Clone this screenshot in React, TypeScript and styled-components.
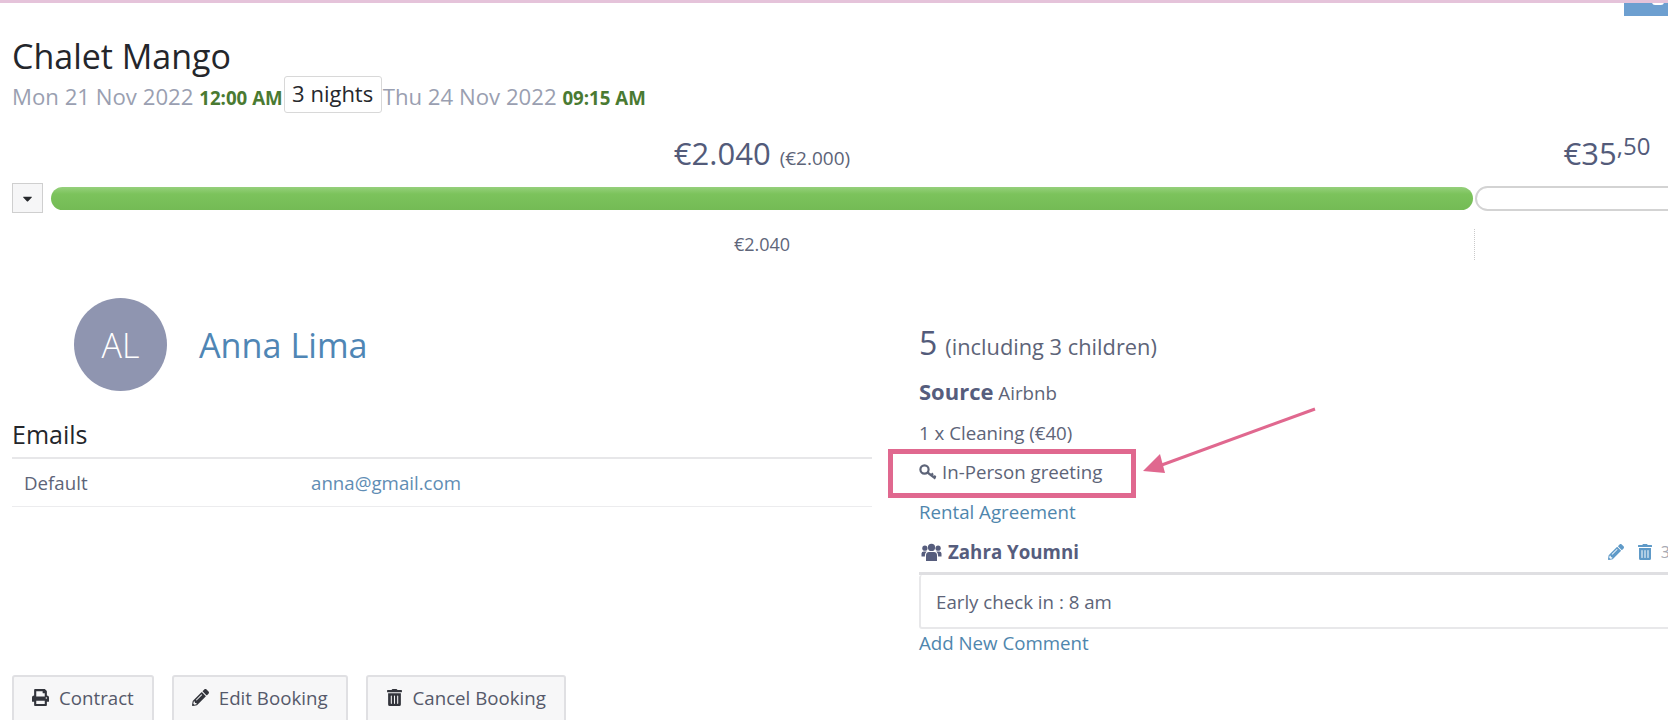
import { createGlobalStyle, styled } from "styled-components";
import { FaCaretDown, FaPencilAlt, FaPrint, FaTrashAlt } from "react-icons/fa";

const GlobalStyle = createGlobalStyle`
  html, body {
    margin: 0;
    padding: 0;
    background: #ffffff;
  }
  body {
    font-family: "Open Sans", "Liberation Sans", sans-serif;
    color: #5d6478;
  }
`;

const Page = styled.div`
  position: relative;
  width: 1668px;
  height: 720px;
  overflow: hidden;
  background: #ffffff;
`;

const TopLine = styled.div`
  height: 3px;
  background: #e5c3da;
`;

const CornerTab = styled.div`
  position: absolute;
  top: 3px;
  right: 0;
  width: 44px;
  height: 13px;
  overflow: hidden;
  background: #6d9fd0;

  &::after {
    content: "";
    position: absolute;
    top: -10px;
    left: 28px;
    width: 8px;
    height: 8px;
    border: 2px solid #ffffff;
    border-radius: 3px;
  }
`;

const Header = styled.header`
  padding: 33px 0 0 12px;
`;

const Title = styled.h1`
  margin: 0;
  font-size: 34px;
  line-height: 40px;
  font-weight: 400;
  color: #24262b;
`;

const DateRow = styled.div`
  display: flex;
  align-items: flex-start;
  height: 37px;
`;

const DateText = styled.span`
  margin-top: 9px;
  font-size: 22.2px;
  line-height: 24px;
  color: #9a9fb1;
  white-space: nowrap;
`;

const Time = styled.b`
  font-size: 18.7px;
  font-weight: 700;
  color: #4a7a32;
`;

const NightsBox = styled.span`
  width: 98px;
  height: 37px;
  margin: 0 1px;
  box-sizing: border-box;
  border: 1px solid #d8d8d8;
  border-radius: 3px;
  font-size: 22px;
  line-height: 33px;
  text-align: center;
  color: #26282c;
  white-space: nowrap;
`;

const SplitRow = styled.div<{ $top: number }>`
  display: grid;
  grid-template-columns: 1424px 266px;
  margin: ${(p) => p.$top}px 0 0 50px;
  width: 1690px;
`;

const AmountCell = styled.div`
  height: 40px;
  text-align: center;
  font-size: 31px;
  line-height: 36px;
  color: #535b7a;
  white-space: nowrap;
`;

const SubAmount = styled.small`
  margin-left: 9px;
  font-size: 19px;
  color: #5d6478;
`;

const Cents = styled.sup`
  font-size: 24px;
  line-height: 0;
  vertical-align: 10px;
`;

const BarRow = styled.div`
  display: flex;
  align-items: center;
  height: 30px;
  width: 1740px;
  margin: 8px 0 0 12px;
`;

const ToggleButton = styled.button`
  display: flex;
  align-items: center;
  justify-content: center;
  flex: none;
  width: 31px;
  height: 30px;
  margin-right: 8px;
  padding: 0;
  background: #f6f6f7;
  border: 1px solid #cfcfcf;
  font-size: 15px;
  color: #26282c;
`;

const PaidBar = styled.div`
  flex: none;
  width: 1422px;
  height: 23px;
  border-radius: 12px;
  background: linear-gradient(#96d07c 0%, #7cc35c 30%, #74bb55 100%);
`;

const OpenBar = styled.div`
  flex: none;
  width: 266px;
  height: 25px;
  margin-left: 2px;
  box-sizing: border-box;
  background: #ffffff;
  border: 2px solid #d3d3d3;
  border-radius: 13px;
`;

const BreakdownCell = styled.div<{ $dotted?: boolean }>`
  height: 31px;
  padding-top: 4px;
  box-sizing: border-box;
  text-align: center;
  font-size: 18px;
  line-height: 22px;
  color: #60667a;
  border-left: ${(p) => (p.$dotted ? "1px dotted #c9c9c9" : "none")};
`;

const Columns = styled.div`
  display: grid;
  grid-template-columns: 860px 760px;
  column-gap: 47px;
  margin-left: 12px;
`;

const LeftColumn = styled.section`
  display: flex;
  flex-direction: column;
  padding-top: 38px;
`;

const GuestRow = styled.div`
  display: flex;
  align-items: center;
  gap: 32px;
  padding-left: 62px;
`;

const Avatar = styled.div`
  display: flex;
  align-items: center;
  justify-content: center;
  width: 93px;
  height: 93px;
  border-radius: 50%;
  background: #8f95b0;
  font-size: 34px;
  font-weight: 300;
  color: #ffffff;
`;

const GuestName = styled.a`
  font-size: 34.2px;
  line-height: 40px;
  color: #4f86b5;
`;

const SectionTitle = styled.h3`
  margin: 28px 0 0;
  padding: 0 0 8px;
  border-bottom: 2px solid #e7e7e9;
  font-size: 25px;
  line-height: 30px;
  font-weight: 400;
  color: #24262b;
`;

const EmailRow = styled.div`
  display: grid;
  grid-template-columns: 287px 1fr;
  height: 47px;
  padding-left: 12px;
  align-items: center;
  border-bottom: 1px solid #ececee;
  font-size: 18.7px;
  line-height: 24px;
`;

const EmailLink = styled.a`
  color: #5f8db4;
`;

const Actions = styled.div`
  display: flex;
  gap: 18px;
  margin-top: 168px;
`;

const ActionButton = styled.button`
  display: flex;
  align-items: center;
  justify-content: center;
  gap: 10px;
  height: 48px;
  box-sizing: border-box;
  padding: 0 18px 3px;
  background: #f7f7f8;
  border: 2px solid #e0e0e3;
  border-radius: 3px;
  font-family: inherit;
  font-size: 18.7px;
  color: #55596a;

  svg {
    font-size: 17px;
    color: #33353c;
  }
`;

const RightColumn = styled.section`
  display: flex;
  flex-direction: column;
  padding-top: 63px;
`;

const Line = styled.div<{ $top?: number }>`
  position: relative;
  height: 24px;
  margin-top: ${(p) => p.$top ?? 15}px;
  font-size: 18.7px;
  line-height: 24px;
  white-space: nowrap;
`;

const GuestCount = styled.div`
  height: 40px;
  font-size: 21.8px;
  line-height: 40px;
  color: #5d6478;

  b {
    margin-right: 8px;
    font-size: 32px;
    font-weight: 400;
    color: #535b7a;
  }
`;

const SourceLine = styled.div`
  height: 30px;
  margin-top: 13px;
  font-size: 18.7px;
  line-height: 30px;

  b {
    font-size: 22px;
    font-weight: 700;
    color: #565d7d;
  }
`;

const GreetingText = styled.span`
  display: inline-flex;
  align-items: center;
  gap: 5px;
`;

const Highlight = styled.div`
  position: absolute;
  left: -31px;
  top: -11px;
  width: 248px;
  height: 49px;
  box-sizing: border-box;
  border: 5px solid #e0688f;
`;

const Arrow = styled.svg`
  position: absolute;
  left: 220px;
  top: -58px;
`;

const TextLink = styled.a`
  color: #4f86ad;
`;

const CommentHeader = styled.div`
  display: flex;
  align-items: center;
  justify-content: space-between;
  height: 24px;
  margin-top: 16px;
  padding: 0 9px 8px 2px;
  border-bottom: 3px solid #dfdfe2;
  font-size: 18.7px;
  line-height: 24px;
`;

const Author = styled.b`
  display: flex;
  align-items: center;
  gap: 6px;
  font-weight: 700;
  color: #565d7d;
`;

const CommentTools = styled.div`
  display: flex;
  align-items: center;
  gap: 13px;
  font-size: 16px;
  color: #5f9ac8;

  span {
    margin-left: -5px;
    color: #a7a9b3;
  }
`;

const CommentCard = styled.div`
  display: flex;
  align-items: center;
  height: 54px;
  box-sizing: border-box;
  padding-left: 15px;
  border: 2px solid #e8e8ea;
  border-top: none;
  border-radius: 3px;
  font-size: 18.7px;
`;

const KeyIcon = () => (
  <svg width="18" height="16" viewBox="0 0 18 16" fill="none" stroke="#5d6478" strokeWidth="2.2">
    <circle cx="5.5" cy="5.5" r="4.1" />
    <path d="M8.5 8.5 L16.5 14.5 M12.2 11.2 L14 9.4 M15 13.4 L16.6 11.8" />
  </svg>
);

const GroupIcon = () => (
  <svg width="21" height="18" viewBox="0 0 20 18" fill="#565d7d">
    <circle cx="10" cy="4.4" r="3.6" />
    <circle cx="3.4" cy="5.2" r="2.6" />
    <circle cx="16.6" cy="5.2" r="2.6" />
    <path d="M4.5 18 V12.5 Q4.5 9 7.5 9 H12.5 Q15.5 9 15.5 12.5 V18 Z" />
    <path d="M0 13.5 V10.5 Q0 8.6 2.4 8.6 H5.2 Q3.4 10 3.4 12.4 V13.5 Z" />
    <path d="M20 13.5 V10.5 Q20 8.6 17.6 8.6 H14.8 Q16.6 10 16.6 12.4 V13.5 Z" />
  </svg>
);

const App = () => (
  <Page>
    <GlobalStyle />
    <TopLine />
    <CornerTab />
    <Header>
      <Title>Chalet Mango</Title>
      <DateRow>
        <DateText>
          Mon 21 Nov 2022 <Time>12:00 AM</Time>
        </DateText>
        <NightsBox>3 nights</NightsBox>
        <DateText>
          Thu 24 Nov 2022 <Time>09:15 AM</Time>
        </DateText>
      </DateRow>
    </Header>
    <SplitRow $top={22}>
      <AmountCell>
        €2.040<SubAmount>(€2.000)</SubAmount>
      </AmountCell>
      <AmountCell>
        €35<Cents>,50</Cents>
      </AmountCell>
    </SplitRow>
    <BarRow>
      <ToggleButton>
        <FaCaretDown />
      </ToggleButton>
      <PaidBar />
      <OpenBar />
    </BarRow>
    <SplitRow $top={16}>
      <BreakdownCell>€2.040</BreakdownCell>
      <BreakdownCell $dotted />
    </SplitRow>
    <Columns>
      <LeftColumn>
        <GuestRow>
          <Avatar>AL</Avatar>
          <GuestName>Anna Lima</GuestName>
        </GuestRow>
        <SectionTitle>Emails</SectionTitle>
        <EmailRow>
          <span>Default</span>
          <EmailLink>anna@gmail.com</EmailLink>
        </EmailRow>
        <Actions>
          <ActionButton>
            <FaPrint />
            Contract
          </ActionButton>
          <ActionButton>
            <FaPencilAlt />
            Edit Booking
          </ActionButton>
          <ActionButton>
            <FaTrashAlt />
            Cancel Booking
          </ActionButton>
        </Actions>
      </LeftColumn>
      <RightColumn>
        <GuestCount>
          <b>5</b>(including 3 children)
        </GuestCount>
        <SourceLine>
          <b>Source</b> Airbnb
        </SourceLine>
        <Line>1 x Cleaning (€40)</Line>
        <Line>
          <GreetingText>
            <KeyIcon />
            In-Person greeting
          </GreetingText>
          <Highlight />
          <Arrow width="180" height="75" viewBox="0 0 180 75">
            <path d="M176 7 L20 64" stroke="#e0688f" strokeWidth="3" />
            <polygon points="4,69 21,52 26,71" fill="#e0688f" />
          </Arrow>
        </Line>
        <Line $top={16}>
          <TextLink>Rental Agreement</TextLink>
        </Line>
        <CommentHeader>
          <Author>
            <GroupIcon />
            Zahra Youmni
          </Author>
          <CommentTools>
            <FaPencilAlt />
            <FaTrashAlt />
            <span>3</span>
          </CommentTools>
        </CommentHeader>
        <CommentCard>Early check in : 8 am</CommentCard>
        <Line $top={2}>
          <TextLink>Add New Comment</TextLink>
        </Line>
      </RightColumn>
    </Columns>
  </Page>
);

export default App;
